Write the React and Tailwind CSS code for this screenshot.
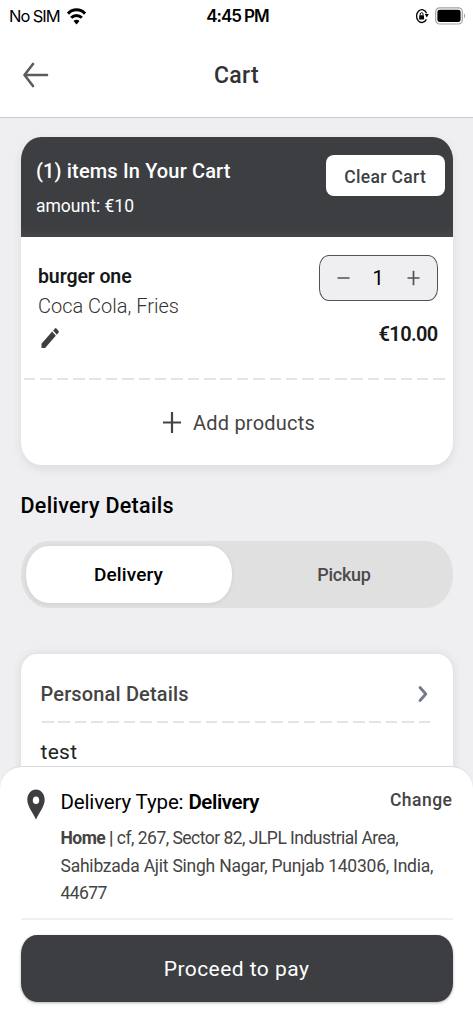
import React, { useState } from "react";

const DashedLine = ({ className = "" }) => (
    <div
        className={`h-[2px] bg-[repeating-linear-gradient(90deg,#e4e4e4_0,#e4e4e4_11.5px,transparent_11.5px,transparent_16.37px)] ${className}`}
    />
);

const StatusBar = () => (
    <div className="grid grid-cols-3 items-center h-[33px] pl-[9px] pr-[7px] text-[17px] text-black">
        <div className="flex items-center gap-[7px]">
            <span className="text-[16.5px] tracking-[-1.05px]">No SIM</span>
            <svg width="19" height="17" viewBox="0 0 19 17" fill="none" stroke="#000" strokeWidth="3">
                <path d="M1 5.6C5.8 0.6 13.2 0.6 18 5.6" />
                <path d="M4.2 9.8C7.2 6.6 11.8 6.6 14.8 9.8" />
                <path d="M9.5 16.5 6.5 13C8.2 11.3 10.8 11.3 12.5 13Z" fill="#000" stroke="none" />
            </svg>
        </div>
        <span className="text-center font-semibold whitespace-nowrap tracking-[-1.05px]">4:45 PM</span>
        <div className="flex items-center justify-end gap-[6px] -mt-[2px]">
            <svg width="14" height="16" viewBox="0 0 14 16" fill="none">
                <path d="M11.6 5.2A5.3 6.4 0 1 0 11.4 11.4" stroke="#000" strokeWidth="1.3" />
                <path d="M9.8 5.9h4l-2 3.6z" fill="#000" />
                <rect x="4.2" y="7.2" width="4.8" height="4.4" rx="0.6" fill="#000" />
                <path d="M5.2 7.5V6.2a1.4 1.6 0 0 1 2.8 0v1.3" stroke="#000" strokeWidth="1" />
            </svg>
            <svg width="31" height="18" viewBox="0 0 31 18">
                <rect x="0.7" y="0.8" width="26.6" height="16.2" rx="4" fill="none" stroke="#a3a3a3" strokeWidth="1.2" />
                <rect x="2.4" y="2.7" width="23.2" height="12.4" rx="2.4" fill="#000" />
                <path d="M29 6.5c1.6 0.8 1.6 4 0 4.8z" fill="#a3a3a3" />
            </svg>
        </div>
    </div>
);

const CartCard = ({ quantity, setQuantity }) => (
    <section className="h-[328px] rounded-[20px/23px] bg-white overflow-hidden shadow-[0_4px_10px_rgba(60,60,90,0.10)]">
        <div className="h-[99.5px] flex justify-between pl-[15.5px] pr-[7.5px] bg-linear-to-b from-[#3c3e42] from-90% to-[#454649] text-white">
            <div className="pt-5">
                <h2 className="text-[20px] leading-7 font-medium tracking-[0.15px]">(1) items In Your Cart</h2>
                <p className="mt-[7px] text-[17.5px] leading-7">amount: €10</p>
            </div>
            <button className="mt-[18px] pt-[3px] w-[119.5px] h-[41px] rounded-lg bg-white text-[17.5px] font-medium tracking-[0.35px] text-[#3f4044]">
                Clear Cart
            </button>
        </div>
        <div className="h-[141px] flex justify-between pl-[17.5px] pr-[15px]">
            <div className="pt-[26px]">
                <h3 className="text-[19.5px] leading-7 font-semibold tracking-[-0.1px] text-[#17181a]">burger one</h3>
                <p className="mt-[1px] text-[20px] leading-7 font-light text-[#333]">Coca Cola, Fries</p>
                <svg className="mt-[8px] ml-[3px]" width="18" height="21" viewBox="0 0 18 21" fill="#3c3e42">
                    <path d="M0.5 15.8 11.2 3.5 14.8 7.8 4.1 20.1H0.5z" />
                    <path d="M12.2 2.4 14 0.4q0.7-0.6 1.4 0L17.6 3q0.5 0.8 0 1.6L15.8 6.7z" />
                </svg>
            </div>
            <div className="pt-[18px] flex flex-col items-end">
                <div className="w-[119px] h-[46px] flex items-center justify-between px-[17px] rounded-[10px/12px] border border-[#515256] bg-[#efeff1]">
                    <button onClick={() => setQuantity(Math.max(1, quantity - 1))}>
                        <svg width="13" height="16" viewBox="0 0 13 16" stroke="#505155" strokeWidth="1.7">
                            <path d="M0.5 8H12.5" />
                        </svg>
                    </button>
                    <span className="text-[20px] text-black">{quantity}</span>
                    <button onClick={() => setQuantity(quantity + 1)}>
                        <svg width="13" height="16" viewBox="0 0 13 16" stroke="#505155" strokeWidth="1.7">
                            <path d="M0.5 8H12.5M6.5 0.8V15.2" />
                        </svg>
                    </button>
                </div>
                <span className="mt-[19px] text-[20px] leading-7 font-semibold tracking-[-0.65px] text-[#17181a]">€10.00</span>
            </div>
        </div>
        <DashedLine className="ml-[3px] mr-2" />
        <button className="w-full h-[86px] pl-[5px] flex items-center justify-center gap-3 text-[20px] tracking-[0.2px] text-[#444]">
            <svg width="18" height="22" viewBox="0 0 18 22" stroke="#444" strokeWidth="2.2">
                <path d="M0 10.5H18M9 0V21" />
            </svg>
            <span>Add products</span>
        </button>
    </section>
);

const DeliveryToggle = ({ mode, setMode }) => (
    <div className="mt-[21px] h-[67px] p-[5px] flex rounded-[27px/33px] bg-[#e0e0e0]">
        {["Delivery", "Pickup"].map((name) => (
            <button
                key={name}
                onClick={() => setMode(name)}
                className={
                    mode === name
                        ? "w-[206px] mr-[9px] pt-[2px] rounded-[22px/28px] bg-white text-[19px] font-medium tracking-[0.15px] text-black shadow-[0_1px_4px_rgba(0,0,0,0.08)]"
                        : "flex-1 rounded-[22px/28px] text-[18px] font-medium tracking-[-0.25px] text-[#4a4a4a]"
                }
            >
                {name}
            </button>
        ))}
    </div>
);

const App = () => {
    const [quantity, setQuantity] = useState(1);
    const [mode, setMode] = useState("Delivery");

    return (
        <div className="w-full h-screen flex flex-col overflow-hidden bg-[#efeff1] font-['Roboto',sans-serif]">
            <header className="h-[118px] shrink-0 bg-white border-b border-[#c9c9d0]">
                <div className="font-['Inter',sans-serif]">
                    <StatusBar />
                </div>
                <div className="h-[83px] grid grid-cols-3 items-center">
                    <button className="pl-[23px]">
                        <svg width="26" height="26" viewBox="0 0 26 26" fill="none" stroke="#5c5c5c" strokeWidth="2.6" strokeLinecap="round" strokeLinejoin="round">
                            <path d="M24 13H1.5M10 2 1.5 13 10 24" />
                        </svg>
                    </button>
                    <h1 className="pt-[3px] text-center text-[23px] font-medium tracking-[0.3px] text-[#333]">Cart</h1>
                </div>
            </header>

            <main className="flex-1 min-h-0 overflow-hidden px-[20.5px] pt-[19px]">
                <CartCard quantity={quantity} setQuantity={setQuantity} />
                <h2 className="mt-[27px] text-[21.5px] leading-7 font-medium tracking-[0.3px] text-black">Delivery Details</h2>
                <DeliveryToggle mode={mode} setMode={setMode} />

                {/* Personal details */}
                <section className="mt-[46px] h-[160px] pl-5 pr-[21px] rounded-[16px/18px] bg-white shadow-[0_0_10px_rgba(60,60,90,0.12)]">
                    <div className="h-[67px] pt-[12px] flex items-center justify-between">
                        <h3 className="text-[20px] font-medium tracking-[0.15px] text-[#444]">Personal Details</h3>
                        <svg className="mr-[1.5px]" width="14" height="18" viewBox="0 0 14 18" fill="none" stroke="#74788d" strokeWidth="2.8" strokeLinecap="round" strokeLinejoin="round">
                            <path d="M4 2.5 9.8 9 4 15.5" />
                        </svg>
                    </div>
                    <DashedLine className="ml-[1.5px]" />
                    <p className="mt-[15px] text-[21px] leading-7 tracking-[0.3px] text-[#222]">test</p>
                </section>
            </main>

            {/* Bottom sheet */}
            <footer className="relative z-10 -mt-6 h-[258px] shrink-0 px-[20.5px] rounded-t-[22px] border-t border-[#dadade] bg-white">
                <div className="h-[153px] flex border-b-2 border-[#f0f0f0]">
                    <svg className="mt-[22px] ml-[6px] mr-[16px] shrink-0" width="18" height="31" viewBox="0 0 18 31">
                        <path d="M9 0.5C4 0.5 0.3 4.8 0.3 10.8C0.3 17 5 22.5 9 30.5C13 22.5 17.7 17 17.7 10.8C17.7 4.8 14 0.5 9 0.5ZM9 7.4a3.2 3.8 0 1 1 0 7.6a3.2 3.8 0 1 1 0-7.6Z" fill="#3c3e42" />
                    </svg>
                    <div className="flex-1 pt-[21px]">
                        <div className="flex justify-between">
                            <p className="text-[20.5px] leading-7 tracking-[-0.15px] text-black whitespace-nowrap">
                                Delivery Type: <span className="font-semibold tracking-[-0.4px]">Delivery</span>
                            </p>
                            <button className="-mt-[5px] text-[17.5px] leading-7 font-medium tracking-[0.5px] text-[#444]">Change</button>
                        </div>
                        <p className="mt-[9px] text-[17.5px] leading-[27.7px] text-[#444] whitespace-nowrap">
                            <span className="tracking-[-0.52px]">
                                <b>Home |</b> cf, 267, Sector 82, JLPL Industrial Area,
                            </span>
                            <br />
                            <span className="tracking-[-0.23px]">Sahibzada Ajit Singh Nagar, Punjab 140306, India,</span>
                            <br />
                            <span className="tracking-[-0.6px]">44677</span>
                        </p>
                    </div>
                </div>
                <button className="mt-[15px] pt-[2px] w-full h-[67px] rounded-[16px/19px] bg-[#3c3e42] text-[21px] tracking-[0.45px] text-white shadow-[0_1px_3px_rgba(0,0,0,0.3)]">
                    Proceed to pay
                </button>
            </footer>
        </div>
    );
};

export default App;
